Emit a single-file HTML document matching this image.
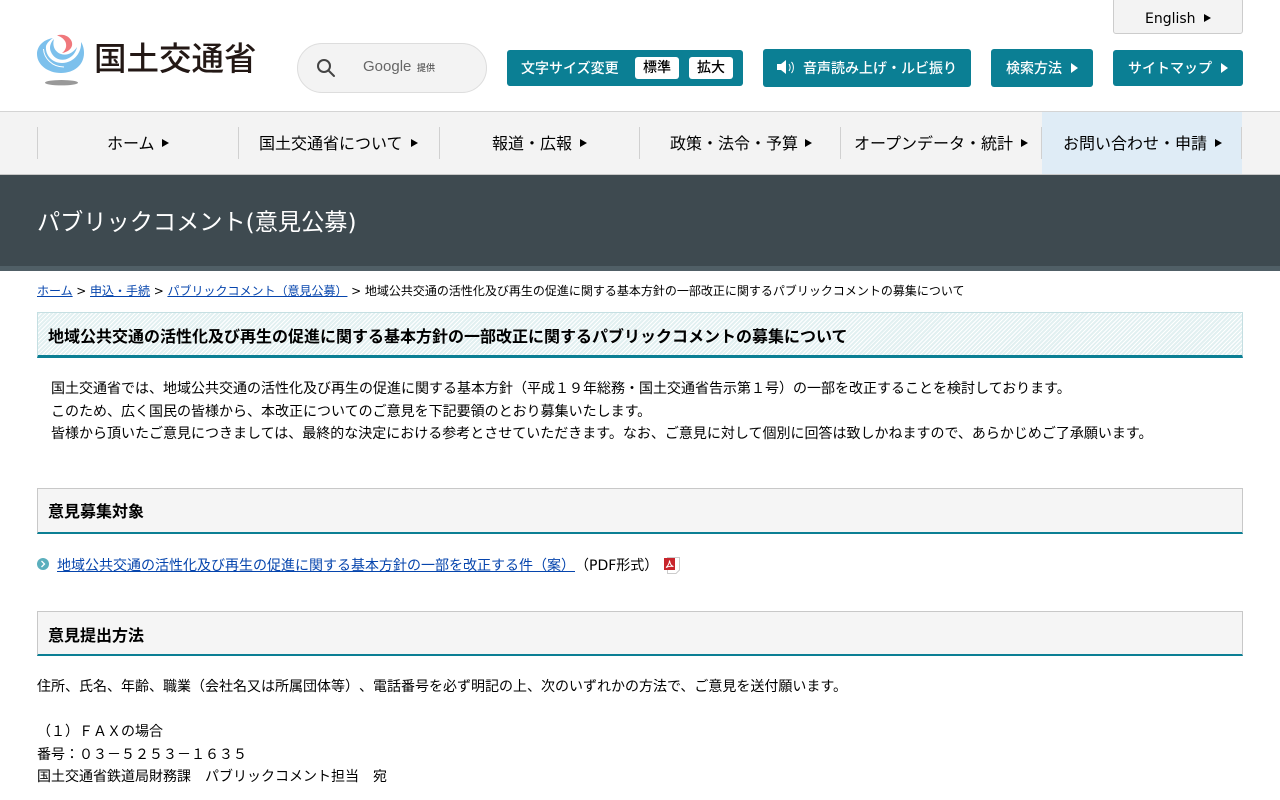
<!DOCTYPE html>
<html lang="ja"><head><meta charset="utf-8"><title>パブリックコメント</title>
<style>
*{box-sizing:border-box}
html,body{margin:0;padding:0;background:#fff}
body{width:1280px;height:800px;overflow:hidden;position:relative;font-family:"DejaVu Sans","Noto Sans CJK JP",sans-serif;color:#000;font-size:14px;text-spacing-trim:space-all}
.a{position:absolute;white-space:nowrap}
.btn{position:absolute;background:#0b7f94;border-radius:3px;color:#fff;font-size:14px}
.tri{position:absolute;width:0;height:0;border-left:7px solid #fff;border-top:5px solid transparent;border-bottom:5px solid transparent}
.trk{position:absolute;width:0;height:0;border-left:7px solid #000;border-top:4.5px solid transparent;border-bottom:4.5px solid transparent}
.nav{position:absolute;left:0;top:111px;width:1280px;height:64px;background:#f3f3f3;border-top:1px solid #d4d4d4;border-bottom:1px solid #c8c8c8}
.div{position:absolute;top:127px;width:1px;height:32px;background:#d0d0d0}
.ni{position:absolute;top:133px;font-size:16px;line-height:22px;white-space:nowrap;text-align:center}
a{color:#0645ad;text-decoration:underline}
.sec{position:absolute;left:37px;width:1206px;background:#f5f5f5;border:1px solid #c8c8c8;border-bottom:2px solid #0b7f94;font-size:16px;font-weight:700;padding-left:10px}
.t{position:absolute;white-space:nowrap;font-size:14px;line-height:22px}
.w{font-weight:500}
</style></head><body>

<svg class="a" style="left:30px;top:28px" width="60" height="62" viewBox="30 28 60 62">
<path d="M53 38C42 40 37 47 37 54C37 65 48 73 61 73C74 73 84 65 84 53C84 49 83 45 81 42C82 52 74 63 62 63C52 63 45 55 46 46C47 43 50 40 53 38Z" fill="#7cc0ec"/>
<path d="M43.500 49C44 58 52 67 64 67" fill="none" stroke="#fff" stroke-width="1"/>
<path d="M54 39C50 43 49 48 51 52C54 59 62 62 69 58C73 56 76 52 77 47C73 53 67 56 61 54C55 52 52 46 54 39Z" fill="#7cc0ec"/>
<path d="M57 35.500C63 33.500 69 36 71.500 41C74 47 69 52 62 53C66 50 67 46 65.500 42C64 39 61 36.500 57 35.500Z" fill="#f0787c"/>
<ellipse cx="61.500" cy="82.700" rx="16.500" ry="2.700" fill="#999"/>
</svg>
<div class="a" style="left:94px;top:35px;font-family:'Noto Sans CJK JP',sans-serif;font-size:32.500px;line-height:44px;font-weight:500;color:#231815">国土交通省</div>

<div class="a" style="left:297px;top:43px;width:190px;height:50px;border-radius:25px;background:#f3f3f3;border:1px solid #ddd"></div>
<svg class="a" style="left:316px;top:58px" width="20" height="20" viewBox="0 0 20 20" fill="none" stroke="#444" stroke-width="2"><circle cx="8" cy="8" r="6"/><path d="M12.500 12.500L18 18" stroke-linecap="round"/></svg>
<div class="a" style="left:363px;top:57px;font-family:'Liberation Sans',sans-serif;font-size:15px;line-height:20px;color:#666">Google</div>
<div class="a" style="left:417px;top:61px;font-family:'Noto Sans CJK JP',sans-serif;font-size:9px;line-height:13px;color:#555;font-weight:500">提供</div>

<div class="a" style="left:1113px;top:-2px;width:130px;height:36px;background:#f3f3f3;border:1px solid #ccc;border-radius:3px"></div>
<div class="a" style="left:1145px;top:9px;font-size:14px;line-height:20px">English</div>
<div class="trk" style="left:1204px;top:13.500px"></div>

<div class="btn" style="left:507px;top:50px;width:236px;height:36px"></div>
<div class="a w" style="left:521px;top:59px;font-size:14px;line-height:20px;color:#fff">文字サイズ変更</div>
<div class="a w" style="left:635px;top:57px;width:44px;height:22px;background:#fff;border-radius:3px;text-align:center;font-size:14px;line-height:23px">標準</div>
<div class="a w" style="left:689px;top:57px;width:44px;height:22px;background:#fff;border-radius:3px;text-align:center;font-size:14px;line-height:23px">拡大</div>

<div class="btn" style="left:763px;top:49px;width:208px;height:38px"></div>
<svg class="a" style="left:776px;top:59px" width="20" height="17" viewBox="0 0 20 17"><path d="M1 5H5L10 1V15L5 11H1Z" fill="#fff"/><path d="M13 5C14.500 7 14.500 10 13 12M15.500 3C18 6 18 11 15.500 14" fill="none" stroke="#fff" stroke-width="1"/></svg>
<div class="a w" style="left:803px;top:59px;font-size:14px;line-height:20px;color:#fff">音声読み上げ・ルビ振り</div>

<div class="btn" style="left:991px;top:49px;width:102px;height:38px"></div>
<div class="a w" style="left:1006px;top:59px;font-size:14px;line-height:20px;color:#fff">検索方法</div>
<div class="tri" style="left:1071px;top:63px"></div>

<div class="btn" style="left:1113px;top:50px;width:130px;height:36px"></div>
<div class="a w" style="left:1128px;top:59px;font-size:14px;line-height:20px;color:#fff">サイトマップ</div>
<div class="tri" style="left:1221px;top:63px"></div>

<div class="nav"></div>
<div class="a" style="left:1042px;top:112px;width:200px;height:62px;background:#dfecf6"></div>
<div class="div" style="left:37px"></div><div class="div" style="left:238px"></div><div class="div" style="left:439px"></div><div class="div" style="left:639px"></div><div class="div" style="left:840px"></div><div class="div" style="left:1041px"></div><div class="div" style="left:1241px"></div>
<div class="ni" style="left:107px">ホーム</div><div class="trk" style="left:162px;top:138.500px"></div>
<div class="ni" style="left:259px">国土交通省について</div><div class="trk" style="left:411px;top:138.500px"></div>
<div class="ni" style="left:492px">報道・広報</div><div class="trk" style="left:580px;top:138.500px"></div>
<div class="ni" style="left:670px">政策・法令・予算</div><div class="trk" style="left:805px;top:138.500px"></div>
<div class="ni" style="left:854px">オープンデータ・統計</div><div class="trk" style="left:1021px;top:138.500px"></div>
<div class="ni" style="left:1063px">お問い合わせ・申請</div><div class="trk" style="left:1215px;top:138.500px"></div>

<div class="a" style="left:0;top:175px;width:1280px;height:91px;background:#3e4a50"></div>
<div class="a" style="left:0;top:266px;width:1280px;height:5px;background:#505f66"></div>
<div class="a" style="left:37px;top:205px;font-size:23.200px;line-height:36px;color:#fff">パブリックコメント(意見公募)</div>

<div class="a" style="left:37px;top:282px;font-size:12px;line-height:18px;word-spacing:-.15px"><a>ホーム</a> &gt; <a>申込・手続</a> &gt; <a>パブリックコメント（意見公募）</a> &gt; 地域公共交通の活性化及び再生の促進に関する基本方針の一部改正に関するパブリックコメントの募集について</div>

<div class="a" style="left:37px;top:312px;width:1206px;height:46px;border:1px solid #c5dfe2;border-bottom:3px solid #0b7f94;background:repeating-linear-gradient(135deg,#e2f0f1 0,#e2f0f1 2px,#fff 2px,#fff 3px);font-size:16px;font-weight:700;line-height:47px;padding-left:10px">地域公共交通の活性化及び再生の促進に関する基本方針の一部改正に関するパブリックコメントの募集について</div>

<div class="t" style="left:51px;top:378px">国土交通省では、地域公共交通の活性化及び再生の促進に関する基本方針（平成１９年総務・国土交通省告示第１号）の一部を改正することを検討しております。</div>
<div class="t" style="left:51px;top:401px">このため、広く国民の皆様から、本改正についてのご意見を下記要領のとおり募集いたします。</div>
<div class="t" style="left:51px;top:423px">皆様から頂いたご意見につきましては、最終的な決定における参考とさせていただきます。なお、ご意見に対して個別に回答は致しかねますので、あらかじめご了承願います。</div>

<div class="sec" style="top:488px;height:46px;line-height:45px">意見募集対象</div>

<svg class="a" style="left:37px;top:558px" width="12" height="12" viewBox="0 0 12 12"><circle cx="6" cy="6" r="6" fill="#5bafbd"/><path d="M4.500 3L7.500 6L4.500 9" fill="none" stroke="#fff" stroke-width="1.300"/></svg>
<div class="t" style="left:57px;top:555px"><a>地域公共交通の活性化及び再生の促進に関する基本方針の一部を改正する件（案）</a>（PDF形式）</div>
<svg class="a" style="left:664px;top:557px" width="16" height="17" viewBox="0 0 16 17"><path d="M3.500 .5H15.500V13L12 16.500H3.500Z" fill="#fff" stroke="#ccc"/><rect x="0" y="1" width="11" height="12" fill="#c8252c"/><path d="M2 10.500C4 9 5.500 6 5.500 3.500C6 7 7 9 9.500 9.500C7 9 4 9.500 2 10.500Z" fill="none" stroke="#fff" stroke-width="1"/></svg>

<div class="sec" style="top:611px;height:45px;line-height:47px">意見提出方法</div>

<div class="t" style="left:37px;top:676px">住所、氏名、年齢、職業（会社名又は所属団体等）、電話番号を必ず明記の上、次のいずれかの方法で、ご意見を送付願います。</div>
<div class="t" style="left:37px;top:721px">（１）ＦＡＸの場合</div>
<div class="t" style="left:37px;top:744px">番号：０３－５２５３－１６３５</div>
<div class="t" style="left:37px;top:766px">国土交通省鉄道局財務課　パブリックコメント担当　宛</div>
</body></html>
